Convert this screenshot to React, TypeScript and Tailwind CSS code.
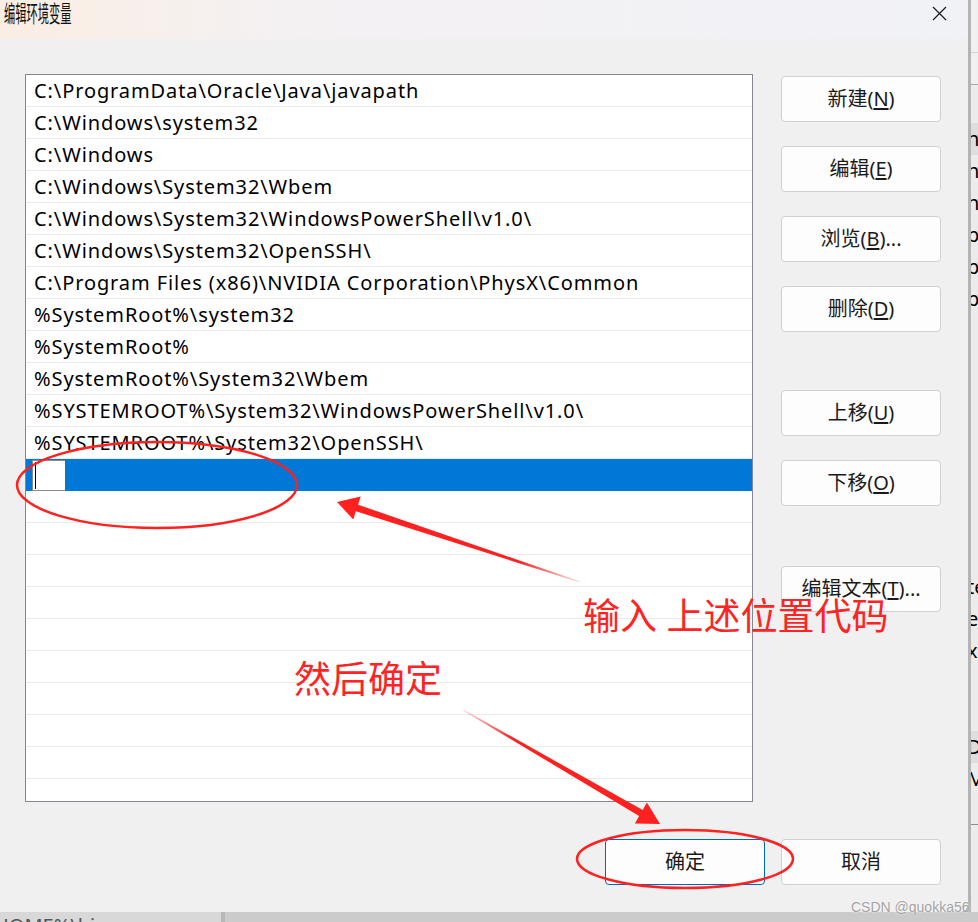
import type { ReactNode } from 'react'

const paths = [
  'C:\\ProgramData\\Oracle\\Java\\javapath',
  'C:\\Windows\\system32',
  'C:\\Windows',
  'C:\\Windows\\System32\\Wbem',
  'C:\\Windows\\System32\\WindowsPowerShell\\v1.0\\',
  'C:\\Windows\\System32\\OpenSSH\\',
  'C:\\Program Files (x86)\\NVIDIA Corporation\\PhysX\\Common',
  '%SystemRoot%\\system32',
  '%SystemRoot%',
  '%SystemRoot%\\System32\\Wbem',
  '%SYSTEMROOT%\\System32\\WindowsPowerShell\\v1.0\\',
  '%SYSTEMROOT%\\System32\\OpenSSH\\',
]

// letters of the window behind, cut off at the right edge
const behindRows: { text: string; hl?: boolean }[] = [
  { text: 'nt', hl: true },
  { text: 'n' },
  { text: 'n' },
  { text: 'p' },
  { text: 'p' },
  { text: 'p' },
  { text: '' },
  { text: '' },
  { text: '' },
  { text: '' },
  { text: '' },
  { text: '' },
  { text: '' },
  { text: '' },
  { text: 'te' },
  { text: 'er' },
  { text: 'x' },
  { text: '' },
  { text: '' },
  { text: 'D', hl: true },
  { text: 'M' },
]

function DlgButton({
  children,
  primary,
  className = '',
}: {
  children: ReactNode
  primary?: boolean
  className?: string
}) {
  return (
    <button
      className={`flex h-[46px] w-[160px] shrink-0 items-center justify-center rounded-[4px] border bg-[#fdfdfd] text-[20px] text-[#1a1a1a] ${
        primary ? 'border-[#0067c0]' : 'border-[#d0d0d0]'
      } ${className}`}
    >
      {children}
    </button>
  )
}

function PathList() {
  const empty = Array.from({ length: 11 })
  return (
    <div className="h-[728px] w-[728px] shrink-0 overflow-hidden border border-[#828790] bg-white">
      {paths.map((p) => (
        <div
          key={p}
          className="flex h-[32px] items-center border-b border-[#ebebeb] pl-[8px] text-[20px] tracking-[0.9px] whitespace-nowrap text-black"
        >
          {p}
        </div>
      ))}
      <div className="flex h-[32px] items-stretch bg-[#0078d7] pt-px">
        <div className="ml-[6px] flex w-[33px] items-center border border-r-0 border-[#8a8a8a] bg-white pl-[2px]">
          <span className="h-[27px] w-px bg-black" />
        </div>
      </div>
      {empty.map((_, i) => (
        <div key={i} className="h-[32px] border-b border-[#ebebeb]" />
      ))}
    </div>
  )
}

function Dialog() {
  return (
    <div className="flex h-[912px] w-[968px] shrink-0 flex-col rounded-br-[8px] bg-[#f0f0f0] shadow-[1px_1px_3px_rgba(0,0,0,0.35)]">
      <div className="flex h-[39px] items-start justify-between bg-gradient-to-r from-[#faeee3] via-[#f4f1f3] via-30% to-[#f1f2f7] pr-[21px] pl-[4px]">
        <span className="inline-block origin-left scale-x-[0.49] text-[23px] leading-[26px] text-[#111]">
          编辑环境变量
        </span>
        <svg width="15" height="15" viewBox="0 0 15 15" className="mt-[6px]">
          <path d="M1 1 L14 14 M14 1 L1 14" stroke="#1a1a1a" strokeWidth="1.2" />
        </svg>
      </div>
      <div className="flex flex-1 flex-col pt-[35px] pr-[27px] pl-[25px]">
        <div className="flex gap-[28px]">
          <PathList />
          <div className="flex flex-col pt-[2px]">
            <DlgButton>
              新建(<span className="underline underline-offset-2">N</span>)
            </DlgButton>
            <DlgButton className="mt-[24px]">
              编辑(<span className="underline underline-offset-2">E</span>)
            </DlgButton>
            <DlgButton className="mt-[24px]">
              浏览(<span className="underline underline-offset-2">B</span>)...
            </DlgButton>
            <DlgButton className="mt-[24px]">
              删除(<span className="underline underline-offset-2">D</span>)
            </DlgButton>
            <DlgButton className="mt-[58px]">
              上移(<span className="underline underline-offset-2">U</span>)
            </DlgButton>
            <DlgButton className="mt-[24px]">
              下移(<span className="underline underline-offset-2">O</span>)
            </DlgButton>
            <DlgButton className="mt-[60px]">
              编辑文本(<span className="underline underline-offset-2">T</span>)...
            </DlgButton>
          </div>
        </div>
        <div className="mt-[37px] flex justify-end gap-[16px]">
          <DlgButton primary>确定</DlgButton>
          <DlgButton>取消</DlgButton>
        </div>
      </div>
    </div>
  )
}

function BehindRight() {
  return (
    <div className="flex w-[10px] flex-col overflow-hidden border-l-[3px] border-[#b4b4b4] bg-[#ececec]">
      <div className="h-[53px] border-b border-[#d6d6d6] bg-[#f0f0f0]" />
      <div className="h-[32px] border-b border-[#a8a8a8] bg-[#f0f0f0]" />
      <div className="h-[38px]" />
      {behindRows.map((r, i) => (
        <div
          key={i}
          className={`flex h-[32px] items-center text-[20px] whitespace-nowrap text-black ${
            r.hl ? 'bg-[#dedede]' : ''
          }`}
        >
          <span className="-ml-[4px]">{r.text}</span>
        </div>
      ))}
      <div className="h-[30px] border-b border-[#8c8c8c]" />
    </div>
  )
}

function BehindBottom() {
  return (
    <div className="flex h-[10px] overflow-hidden">
      <div className="w-[225px] overflow-hidden border-r-[4px] border-[#b8b8b8] bg-[#d8d8d8] pt-[4px] text-[20px] leading-[20px] text-[#555]">
        <span className="-ml-[6px]">HOME%\bin</span>
      </div>
      <div className="flex-1 bg-[#cbcbcb]" />
    </div>
  )
}

function Annotations() {
  return (
    <>
      <svg
        width="978"
        height="922"
        viewBox="0 0 978 922"
        className="pointer-events-none absolute inset-0"
      >
        <defs>
          <linearGradient id="fade1" x1="580" y1="582" x2="338" y2="503" gradientUnits="userSpaceOnUse">
            <stop offset="0" stopColor="#ff2020" stopOpacity="0.15" />
            <stop offset="0.25" stopColor="#ff2020" stopOpacity="1" />
          </linearGradient>
          <linearGradient id="fade2" x1="463" y1="710" x2="660" y2="824" gradientUnits="userSpaceOnUse">
            <stop offset="0" stopColor="#ff2020" stopOpacity="0.15" />
            <stop offset="0.25" stopColor="#ff2020" stopOpacity="1" />
          </linearGradient>
        </defs>
        <ellipse cx="157" cy="485" rx="140" ry="43" fill="none" stroke="#ff2020" strokeWidth="2.5" />
        <polygon
          points="337,502 360.7,496.6 358.1,504.7 580.2,581.5 579.8,582.5 355.9,511.3 353.3,519.4"
          fill="url(#fade1)"
        />
        <polygon
          points="660,824 634.9,823.4 639.1,816 462.75,710.43 463.25,709.57 642.7,810 646.9,802.6"
          fill="url(#fade2)"
        />
        <ellipse cx="685" cy="859" rx="108" ry="29" fill="none" stroke="#ff2020" strokeWidth="2.5" />
      </svg>
      <div className="pointer-events-none absolute top-[597px] left-[583px] text-[37px] leading-none whitespace-nowrap text-[#ff2424]">
        输入 上述位置代码
      </div>
      <div className="pointer-events-none absolute top-[660px] left-[294px] text-[37px] leading-none whitespace-nowrap text-[#ff2424]">
        然后确定
      </div>
      <div className="pointer-events-none absolute top-[897px] left-[851px] font-['Liberation_Sans',sans-serif] text-[14px] whitespace-nowrap text-[#a3a3a3] [text-shadow:0_0_2px_#fff]">
        CSDN @quokka56
      </div>
    </>
  )
}

export default function App() {
  return (
    <div className="relative h-[922px] w-[978px] overflow-hidden bg-[#cbcbcb] font-['Noto_Sans','Noto_Sans_CJK_SC',sans-serif]">
      <div className="flex h-[912px]">
        <Dialog />
        <BehindRight />
      </div>
      <BehindBottom />
      <Annotations />
    </div>
  )
}
